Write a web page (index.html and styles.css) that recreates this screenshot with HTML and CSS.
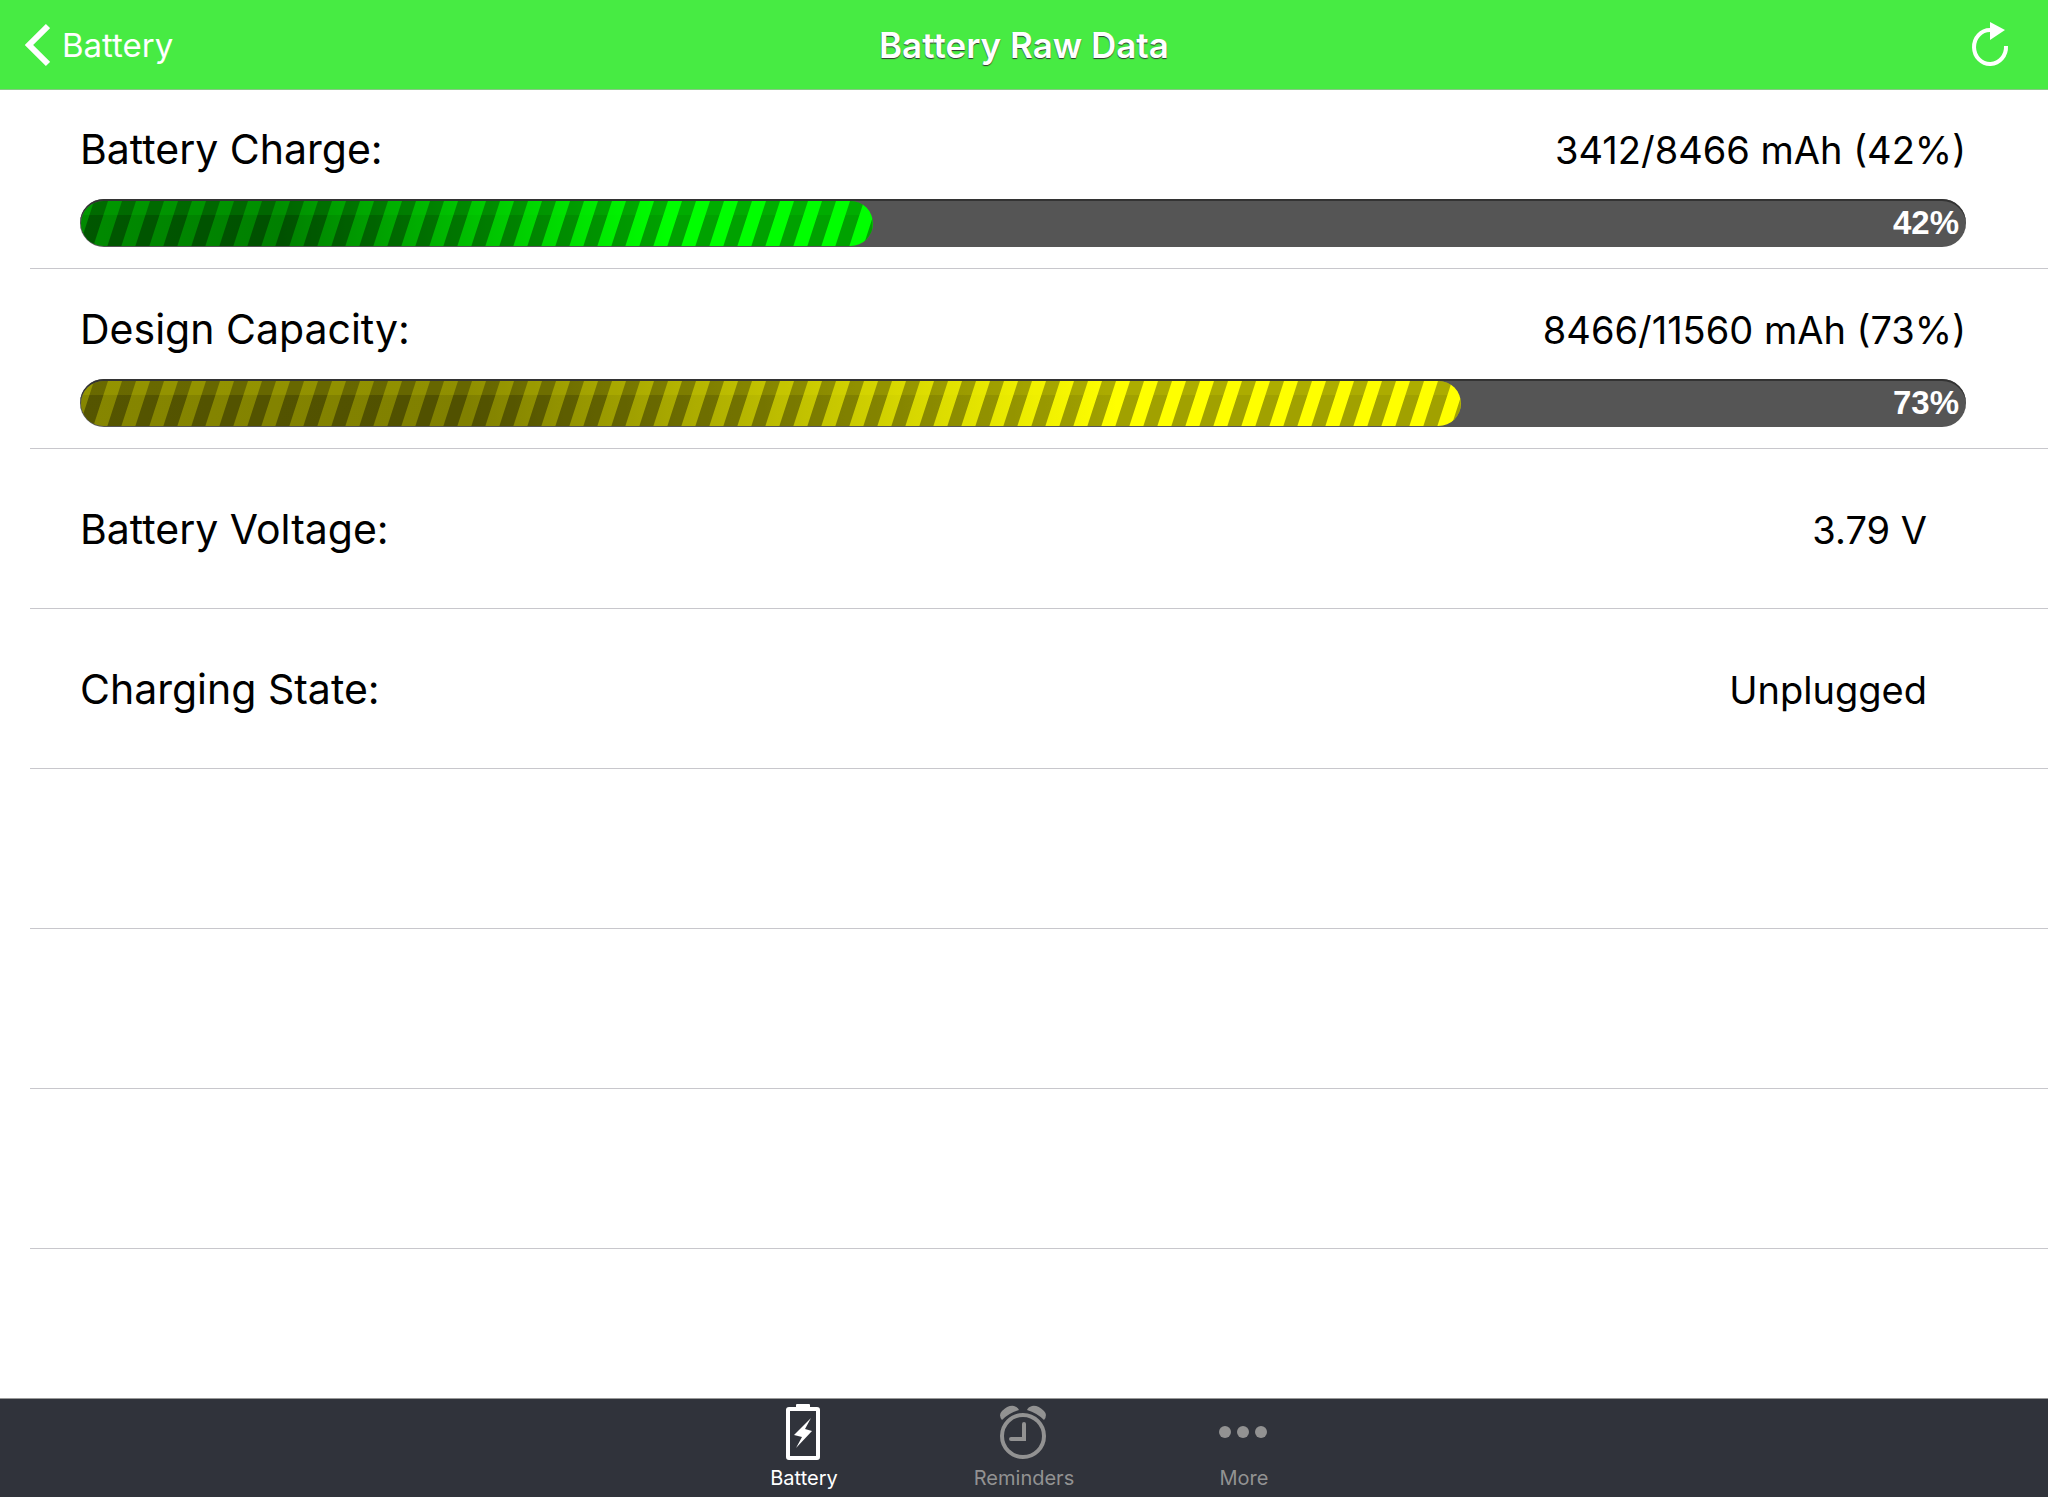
FILE: index.html
```html
<!DOCTYPE html>
<html lang="en">
<head>
<meta charset="UTF-8">
<meta name="viewport" content="width=device-width, initial-scale=1.0">
<title>Battery Raw Data</title>
<link rel="stylesheet" href="styles.css">
</head>
<body>
  <header class="navbar">
    <a class="back" href="#battery">
      <svg width="26" height="44" viewBox="0 0 26 44"><path d="M24 3 L5 22 L24 41" fill="none" stroke="#fff" stroke-width="6"/></svg>
      Battery
    </a>
    <h1>Battery Raw Data</h1>
    <button class="refresh" aria-label="Refresh">
      <svg width="38" height="46" viewBox="0 0 38 46">
        <path d="M35 24 A16 17 0 1 1 19 8" fill="none" stroke="#fff" stroke-width="4"/>
        <path d="M19 0 L34 8 L19 18 Z" fill="#fff"/>
      </svg>
    </button>
  </header>

  <main>
    <ul class="list">
      <li class="row meter">
        <div class="line">
          <span class="label">Battery Charge:</span>
          <span class="value">3412/8466 mAh (42%)</span>
        </div>
        <div class="bar">
          <div class="fill green" style="width: 42%">
            <svg class="stripes" width="100%" height="100%">
              <pattern id="stripe" x="41" width="28" height="46" patternUnits="userSpaceOnUse" patternTransform="skewX(-18)">
                <rect width="14" height="46" fill-opacity=".37"/>
              </pattern>
              <rect width="100%" height="100%" fill="url(#stripe)"/>
              <rect class="gloss" width="100%" height="14"/>
            </svg>
          </div>
          <span class="percent">42%</span>
        </div>
      </li>
      <li class="row meter">
        <div class="line">
          <span class="label">Design Capacity:</span>
          <span class="value">8466/11560 mAh (73%)</span>
        </div>
        <div class="bar">
          <div class="fill yellow" style="width: 73.2%">
            <svg class="stripes" width="100%" height="100%">
              <rect width="100%" height="100%" fill="url(#stripe)"/>
              <rect class="gloss" width="100%" height="14"/>
            </svg>
          </div>
          <span class="percent">73%</span>
        </div>
      </li>
      <li class="row">
        <span class="label">Battery Voltage:</span>
        <span class="value">3.79 V</span>
      </li>
      <li class="row">
        <span class="label">Charging State:</span>
        <span class="value">Unplugged</span>
      </li>
      <li class="row"></li>
      <li class="row"></li>
      <li class="row"></li>
    </ul>
  </main>

  <nav class="tabbar">
    <a class="tab active" href="#battery">
      <svg width="60" height="60" viewBox="0 0 60 60">
        <rect x="14" y="7" width="30" height="49" rx="1" fill="none" stroke="currentColor" stroke-width="4"/>
        <path d="M22 6 V3 Q22 2 23 2 H35 Q36 2 36 3 V6 Z" fill="currentColor"/>
        <path d="M37 16 L20 33 L28 35 L22 46 L38 29 L31 27 Z" fill="currentColor"/>
      </svg>
      Battery
    </a>
    <a class="tab" href="#reminders">
      <svg width="60" height="60" viewBox="0 0 60 60">
        <circle cx="29" cy="34" r="21" fill="none" stroke="currentColor" stroke-width="4"/>
        <path d="M30 22 V37 H17" fill="none" stroke="currentColor" stroke-width="4" stroke-linecap="round"/>
        <path d="M8 18 Q4 13 8 9 Q14 3 20 4 Q24 5 25 8 Q15 11 8 18 Z" fill="currentColor"/>
        <path d="M50 18 Q54 13 50 9 Q44 3 38 4 Q34 5 33 8 Q43 11 50 18 Z" fill="currentColor"/>
      </svg>
      Reminders
    </a>
    <a class="tab" href="#more">
      <svg width="60" height="60" viewBox="0 0 60 60">
        <circle cx="11" cy="30" r="6" fill="currentColor"/>
        <circle cx="29" cy="30" r="6" fill="currentColor"/>
        <circle cx="47" cy="30" r="6" fill="currentColor"/>
      </svg>
      More
    </a>
  </nav>
</body>
</html>
```

FILE: styles.css
```css
* {
  box-sizing: border-box;
}

body {
  display: flex;
  flex-direction: column;
  min-height: 100vh;
  margin: 0;
  font-family: Inter, "Liberation Sans", sans-serif;
  background-color: #fff;
  color: #000;
}

a {
  color: inherit;
  text-decoration: none;
}

.navbar {
  display: grid;
  grid-template-columns: 1fr auto 1fr;
  align-items: center;
  height: 89px;
  padding: 0 24px;
  background-color: #47eb43;
  box-shadow: 0 1px 0 #86c984;
  color: #fff;
}

.navbar h1 {
  margin: 0;
  font-size: 35px;
  font-weight: 600;
  text-shadow: 0 1px 1px #333;
}

.back {
  display: flex;
  align-items: center;
  gap: 12px;
  font-size: 33px;
}

.refresh {
  justify-self: end;
  display: flex;
  margin-right: 15px;
  padding: 0;
  border: none;
  background: none;
  cursor: pointer;
}

main {
  flex: 1;
}

.list {
  margin: 0;
  padding: 0 0 0 30px;
  list-style: none;
}

.row {
  display: flex;
  align-items: baseline;
  justify-content: space-between;
  height: 160px;
  padding: 0 121px 0 50px;
  border-bottom: 1px solid #c8c7cc;
  line-height: 160px;
}

.meter {
  display: block;
  height: 180px;
  padding: 30px 82px 0 50px;
  line-height: 60px;
}

.line {
  display: flex;
  align-items: baseline;
  justify-content: space-between;
  height: 60px;
  margin-bottom: 20px;
}

.label {
  font-size: 41px;
}

.value {
  font-size: 38px;
}

.bar {
  position: relative;
  height: 48px;
  padding: 2px 0 1px 1px;
  border-radius: 24px;
  background-color: #555;
  box-shadow: inset 0 2px 0 #333;
}

.fill {
  height: 45px;
  border-radius: 23px;
  overflow: hidden;
}

.green {
  background: linear-gradient(to right, #008a00, #008000 25%, #0f0 74%);
  color: #0f0;
}

.yellow {
  background: linear-gradient(to right, #868600, #808000 28%, #ff0 75%);
  color: #ff0;
}

.stripes {
  display: block;
}

.gloss {
  fill: currentColor;
  fill-opacity: .12;
}

/* sits on top of the track, at its right end */
.percent {
  position: absolute;
  top: 0;
  right: 7px;
  font: bold 33px/48px "Liberation Sans", sans-serif;
  color: #fff;
}

.tabbar {
  display: flex;
  justify-content: center;
  height: 99px;
  border-top: 1px solid #999;
  background-color: #30333b;
  color: #929292;
}

.tab {
  display: flex;
  flex-direction: column;
  align-items: center;
  width: 220px;
  padding-top: 3px;
  font-size: 20px;
  line-height: 32px;
}

.active {
  color: #fff;
}
```
